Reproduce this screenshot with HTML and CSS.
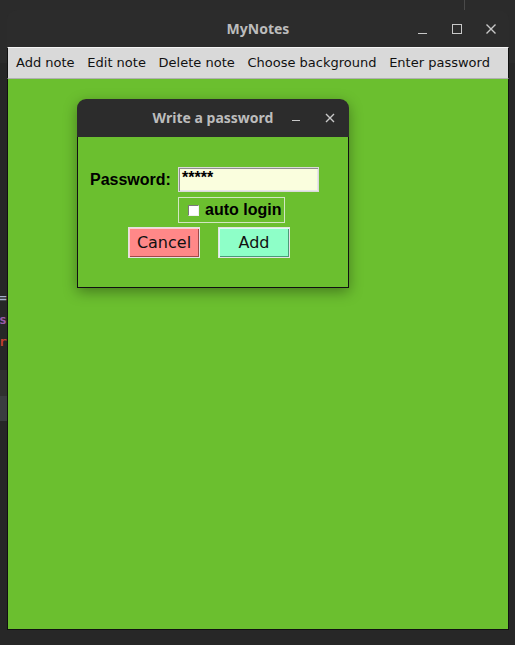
FILE: index.html
```html
<!DOCTYPE html>
<html>
<head>
<meta charset="utf-8">
<title>MyNotes</title>
<link rel="stylesheet" href="styles.css">
</head>
<body>
<div class="desktop">
  <div class="strip">
    <span class="g g1">=</span>
    <span class="g g2">s</span>
    <span class="g g3">r</span>
  </div>
  <div class="window">
    <div class="titlebar">
      <span class="title">MyNotes</span>
      <div class="wctrls">
        <span class="wmin"></span>
        <span class="wmax"></span>
        <svg class="wclose" width="12" height="12" viewBox="0 0 12 12"><path d="M1.5 1.5L10.5 10.5M10.5 1.5L1.5 10.5" stroke="#c8c8c8" stroke-width="1.4"/></svg>
      </div>
    </div>
    <div class="menubar">
      <span class="mi">Add note</span>
      <span class="mi">Edit note</span>
      <span class="mi">Delete note</span>
      <span class="mi">Choose background</span>
      <span class="mi">Enter password</span>
    </div>
    <div class="content">
      <div class="dialog">
        <div class="dtitlebar">
          <span class="dtitle">Write a password</span>
          <span class="dmin"></span>
          <svg class="dclose" width="10" height="10" viewBox="0 0 10 10"><path d="M1 1L9 9M9 1L1 9" stroke="#c8c8c8" stroke-width="1.4"/></svg>
        </div>
        <div class="dbody">
          <div class="row1">
            <span class="label">Password:</span>
            <div class="entry">*****</div>
          </div>
          <div class="row2">
            <div class="checkframe">
              <span class="box"></span>
              <span class="clabel">auto login</span>
            </div>
          </div>
          <div class="row3">
            <div class="btn cancel">Cancel</div>
            <div class="btn add">Add</div>
          </div>
        </div>
      </div>
    </div>
  </div>
</div>
</body>
</html>
```
FILE: styles.css
```css
html, body {
  margin: 0;
  padding: 0;
}
body {
  width: 515px;
  height: 645px;
  overflow: hidden;
  background: #272727;
}
.desktop {
  display: flex;
  width: 515px;
  height: 645px;
  background:
    linear-gradient(#4a4a4a, #4a4a4a) 464px 0 / 1px 10px no-repeat,
    linear-gradient(#2b2b2b, #2b2b2b) 0 0 / 515px 63px no-repeat,
    #272727;
}
.strip {
  width: 7px;
  flex: none;
  display: flex;
  flex-direction: column;
  overflow: hidden;
  padding-top: 287px;
  background:
    linear-gradient(#303030, #303030) 0 370px / 7px 26px no-repeat,
    linear-gradient(#3a3c40, #3a3c40) 0 396px / 7px 25px no-repeat;
  font-family: "DejaVu Sans Mono", monospace;
  font-size: 13px;
  line-height: 22px;
}
.g { display: block; height: 22px; margin-left: -1px; font-weight: bold; }
.g1 { color: #a4b0cc; }
.g2 { color: #9a5aaa; }
.g3 { color: #c04030; }

.window {
  width: 502px;
  height: 620px;
  margin-top: 10px;
  display: flex;
  flex-direction: column;
  flex: none;
}
.titlebar {
  height: 37px;
  flex: none;
  background: #2c2c2c;
  border-radius: 10px 10px 0 0;
  position: relative;
  display: flex;
  align-items: center;
  justify-content: center;
}
.title {
  font-family: "Noto Sans", sans-serif;
  font-weight: bold;
  font-size: 14px;
  color: #bcbcbc;
  margin-top: -1px;
}
.wctrls {
  position: absolute;
  right: 12px;
  top: 13px;
  display: flex;
  align-items: center;
  gap: 0;
}
.wmin {
  width: 9px;
  height: 1px;
  background: #c8c8c8;
  margin-top: 8px;
  margin-right: 25px;
}
.wmax {
  width: 8px;
  height: 8px;
  border: 1px solid #c8c8c8;
  margin-right: 23px;
}
.wclose { display: block; }

.menubar {
  height: 30px;
  flex: none;
  box-sizing: border-box;
  height: 32px;
  background: #d9d9d9;
  border-top: 1px solid #f4f4f4;
  border-left: 1px solid #111;
  border-right: 1px solid #111;
  border-bottom: 1px solid #b0b0b0;
  display: flex;
  align-items: center;
  padding-left: 1.7px;
  padding-bottom: 2px;
  font-family: "DejaVu Sans", sans-serif;
  font-size: 13px;
  color: #111;
}
.mi {
  padding: 0 6.35px;
  white-space: nowrap;
}

.content {
  flex: 1;
  background: #6bbf2f;
  border: 1px solid #111;
  border-top: none;
  position: relative;
}

.dialog {
  position: absolute;
  left: 69px;
  top: 20px;
  width: 272px;
  height: 189px;
  display: flex;
  flex-direction: column;
  border-radius: 9px 9px 0 0;
  box-shadow: 0 4px 14px rgba(0, 0, 0, 0.35);
}
.dtitlebar {
  height: 38px;
  flex: none;
  background: #2c2c2c;
  border-radius: 9px 9px 0 0;
  position: relative;
  display: flex;
  align-items: center;
  justify-content: center;
}
.dtitle {
  font-family: "Noto Sans", sans-serif;
  font-weight: bold;
  font-size: 14px;
  color: #bcbcbc;
  margin-top: -1px;
}
.dmin {
  position: absolute;
  left: 215px;
  top: 21px;
  width: 8px;
  height: 1px;
  background: #c8c8c8;
}
.dclose {
  position: absolute;
  left: 248px;
  top: 14px;
}
.dbody {
  flex: 1;
  background: #6bbf2f;
  border: 1px solid #111;
  border-top: none;
  display: flex;
  flex-direction: column;
  font-family: "Liberation Sans", Arial, sans-serif;
}
.row1 {
  display: flex;
  align-items: center;
  margin-top: 30px;
  padding-left: 12px;
}
.label {
  width: 88px;
  font-weight: bold;
  font-size: 16px;
  color: #000;
}
.entry {
  height: 21px;
  box-sizing: content-box;
  background: #fafede;
  border: 1px solid #dadada;
  box-shadow: inset 1px 1px 0 #8e8e8e, inset -1px -1px 0 #e8e8e8;
  padding: 1px;
  padding-left: 3px;
  width: 135px;
  font-weight: bold;
  font-size: 16px;
  line-height: 18px;
  color: #000;
}
.row2 {
  margin-top: 5px;
  padding-left: 100px;
  display: flex;
}
.checkframe {
  width: 105px;
  height: 24px;
  border: 1px solid #d2e6c2;
  display: flex;
  align-items: center;
}
.box {
  width: 9px;
  height: 9px;
  background: #fff;
  border-top: 1px solid #7a7a7a;
  border-left: 1px solid #7a7a7a;
  border-right: 1px solid #f0f0f0;
  border-bottom: 1px solid #f0f0f0;
  margin-left: 9px;
  margin-right: 6px;
  margin-top: 1px;
}
.clabel {
  font-weight: bold;
  font-size: 16px;
  color: #000;
}
.row3 {
  margin-top: 4px;
  padding-left: 50px;
  display: flex;
  gap: 18px;
}
.btn {
  width: 70px;
  height: 29px;
  border: 1px solid #e2e2e2;
  display: flex;
  align-items: center;
  justify-content: center;
  font-family: "DejaVu Sans", sans-serif;
  font-size: 16px;
  color: #111;
}
.cancel { background: #ff8888; box-shadow: inset 1px 1px 0 #ffd0d0, inset -1px -1px 0 #a04848; }
.add { background: #8effc8; box-shadow: inset 1px 1px 0 #d8fff0, inset -1px -1px 0 #4a9a78; }
```
